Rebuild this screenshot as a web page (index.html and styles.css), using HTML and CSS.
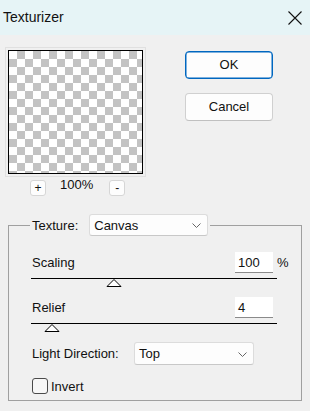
FILE: index.html
```html
<html>
    <head>
        <title>Texturizer</title>
        <link rel="stylesheet" href="styles.css">
    </head>
    <body>
        <div class="titlebar">
            <span class="title">Texturizer</span>
            <svg class="close" width="14" height="14" viewBox="0 0 14 14">
                <path d="M0.5 0.5 L13.5 13.5 M13.5 0.5 L0.5 13.5" stroke="#111" stroke-width="1.1" fill="none"/>
            </svg>
        </div>

        <div class="top">
            <div class="left">
                <div class="frame">
                    <div class="preview"></div>
                </div>
                <div class="zoomrow">
                    <div class="zbtn">+</div>
                    <span class="zoomval">100%</span>
                    <div class="zbtn">-</div>
                </div>
            </div>
            <div class="buttons">
                <div class="btn default">OK</div>
                <div class="btn">Cancel</div>
            </div>
        </div>

        <fieldset class="group">
            <legend class="legend">
                <span class="lbl">Texture:</span>
                <div class="combo texture">
                    <span>Canvas</span>
                    <svg width="9" height="5" viewBox="0 0 9 5"><path d="M0.5 0.5 L4.5 4.5 L8.5 0.5" stroke="#666" fill="none"/></svg>
                </div>
            </legend>

            <div class="row first">
                <span class="lbl">Scaling</span>
                <div class="num">100</div>
                <span class="unit">%</span>
            </div>
            <div class="track"></div>
            <svg class="thumb scaling" width="16" height="8" viewBox="0 0 16 8"><path d="M8 0.5 L15 7.5 L1 7.5 Z" stroke="#000" fill="#fff"/></svg>

            <div class="row">
                <span class="lbl">Relief</span>
                <div class="num">4</div>
                <span class="unit"></span>
            </div>
            <div class="track"></div>
            <svg class="thumb relief" width="16" height="8" viewBox="0 0 16 8"><path d="M8 0.5 L15 7.5 L1 7.5 Z" stroke="#000" fill="#fff"/></svg>

            <div class="row light">
                <span class="lbl">Light Direction:</span>
                <div class="combo direction">
                    <span>Top</span>
                    <svg width="9" height="5" viewBox="0 0 9 5"><path d="M0.5 0.5 L4.5 4.5 L8.5 0.5" stroke="#666" fill="none"/></svg>
                </div>
            </div>

            <div class="check">
                <div class="box"></div>
                <span>Invert</span>
            </div>
        </fieldset>
    </body>
</html>
```

FILE: styles.css
```css
body {
    margin: 0;
    background: #f0f0f0;
    font-family: "Liberation Sans", Arial, sans-serif;
    font-size: 13px;
    color: #111;
    width: 310px;
    height: 411px;
    overflow: hidden;
}

.titlebar {
    height: 35px;
    background: #e6f4f6;
    display: flex;
    align-items: center;
    justify-content: space-between;
    padding: 0 8px 0 3px;
}

.title {
    font-size: 14px;
    margin-top: -1px;
}

.close {
    margin-top: 1px;
}

.top {
    display: flex;
    padding: 12px 0 0 5px;
}

.left {
    width: 141px;
}

.frame {
    border: 1px solid #e0e0e0;
    padding: 2px;
}

.preview {
    box-sizing: border-box;
    width: 135px;
    height: 124px;
    border: 1px solid #000;
    background: conic-gradient(#c3c3c3 25%, #fff 0 50%, #c3c3c3 0 75%, #fff 0) 0 0 / 16px 16px;
}

.zoomrow {
    display: flex;
    align-items: flex-start;
    margin: 3px 0 0 25px;
}

.zbtn {
    box-sizing: border-box;
    width: 16px;
    height: 16px;
    background: #fdfdfd;
    border: 1px solid #d6d6d6;
    border-radius: 3px;
    text-align: center;
    line-height: 14px;
    font-size: 12px;
}

.zoomval {
    margin: -3px 16px 0 14px;
    line-height: 16px;
}

.buttons {
    margin: 4px 0 0 39px;
    display: flex;
    flex-direction: column;
    gap: 14px;
}

.btn {
    box-sizing: border-box;
    width: 88px;
    height: 28px;
    background: #fdfdfd;
    border: 1px solid #d0d0d0;
    border-bottom-color: #c0c0c0;
    border-radius: 4px;
    text-align: center;
    line-height: 26px;
}

.btn.default {
    border: 1px solid #0067c0;
    box-shadow: inset 0 0 0 0.5px #0067c0;
}

.group {
    margin: 18px 8px 0 8px;
    padding: 0 0 0 21px;
    border: 1px solid #a0a0a0;
    height: 187px;
    box-sizing: border-box;
}

.legend {
    padding: 0 2px;
    display: flex;
    align-items: center;
}

.legend .combo {
    margin-left: 11px;
}

.combo {
    box-sizing: border-box;
    width: 119px;
    height: 22px;
    background: #fdfdfd;
    border: 1px solid #dcdcdc;
    border-bottom-color: #c8c8c8;
    border-radius: 3px;
    display: flex;
    align-items: center;
    justify-content: space-between;
    padding: 0 6px 0 4px;
}

.combo svg {
    margin-top: 1px;
}

.row {
    box-sizing: border-box;
    width: 259px;
    display: flex;
    align-items: center;
    padding-left: 2px;
}

.row.first {
    margin-top: 16px;
}

.row .lbl {
    flex: 1;
}

.num {
    box-sizing: border-box;
    width: 38px;
    height: 21px;
    background: #fff;
    border-bottom: 1px solid #8a8a8a;
    padding: 3px 0 0 3px;
}

.unit {
    width: 12px;
    margin-left: 4px;
}

.track {
    width: 246px;
    height: 1px;
    background: #000;
    margin: 5px 0 0 1px;
}

.thumb {
    display: block;
}

.thumb.scaling {
    margin-left: 76px;
}

.thumb.relief {
    margin-left: 14px;
}

.row + .track + .thumb + .row {
    margin-top: 10px;
}

.row.light {
    margin-top: 13px;
}

.row.light .lbl {
    flex: none;
    width: 102px;
}

.direction {
    height: 23px;
    width: 120px;
}

.check {
    display: flex;
    align-items: center;
    margin-top: 13px;
    padding-left: 2px;
}

.box {
    box-sizing: border-box;
    width: 16px;
    height: 16px;
    border: 1px solid #4a4a4a;
    border-radius: 3px;
    background: #f7f7f7;
    margin-right: 3px;
}
```
